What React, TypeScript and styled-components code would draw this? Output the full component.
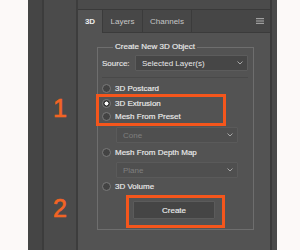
import styled, { createGlobalStyle } from "styled-components";

const Global = createGlobalStyle`
  html, body {
    margin: 0;
    padding: 0;
    background: #fcf9f8;
    font-family: "Liberation Sans", Arial, sans-serif;
  }
`;

const Screen = styled.div`
  display: flex;
  height: 250px;
  padding-left: 28px;
  overflow: hidden;
`;

const DockStrip = styled.div`
  width: 14px;
  background: #454545;
  border-right: 2px solid #3c3c3c;
`;

const Gutter = styled.div`
  width: 32px;
  background: #4b4b4b;
  border-right: 2px solid #3d3d3d;
  display: flex;
  flex-direction: column;
  align-items: center;
`;

const StepNumber = styled.div<{ $top: number }>`
  margin-top: ${(p) => p.$top}px;
  height: 25px;
  line-height: 25px;
  font-size: 25px;
  color: #f26424;
  -webkit-text-stroke: 0.6px #f26424;
`;

const Panel = styled.div`
  width: 192px;
  background: #535353;
  display: flex;
  flex-direction: column;
`;

const PanelEdge = styled.div`
  width: 5px;
  background: #4a4a4a;
  border-left: 2px solid #3a3a3a;
`;

const TopStrip = styled.div`
  height: 9px;
  background: #4b4b4b;
  border-bottom: 1px solid #3a3a3a;
`;

const TabBar = styled.div`
  display: flex;
  height: 23px;
  background: #464646;
  align-items: stretch;
`;

const Tab = styled.div<{ $w: number; $active?: boolean }>`
  width: ${(p) => p.$w}px;
  box-sizing: border-box;
  display: flex;
  align-items: center;
  justify-content: center;
  font-size: 8px;
  font-weight: ${(p) => (p.$active ? "bold" : "normal")};
  color: ${(p) => (p.$active ? "#ececec" : "#c6c6c6")};
  background: ${(p) => (p.$active ? "#535353" : "#474747")};
  border-right: 1px solid #3b3b3b;
  border-bottom: ${(p) => (p.$active ? "none" : "1px solid #3b3b3b")};
`;

const TabFill = styled.div`
  flex: 1;
  display: flex;
  align-items: center;
  justify-content: flex-end;
  padding-right: 6px;
  border-bottom: 1px solid #3b3b3b;
`;

const Content = styled.div`
  padding: 9px 16px 0 19px;
`;

const Group = styled.fieldset`
  margin: 0;
  padding: 3px 5px 1px 4px;
  border: 1px solid #6e6e6e;
  min-width: 0;
`;

const GroupTitle = styled.legend`
  margin-left: 11px;
  padding: 0 2px;
  height: 10px;
  line-height: 10px;
  font-size: 8px;
  color: #ececec;
  -webkit-text-stroke: 0.15px #ececec;
`;

const SourceRow = styled.div`
  display: flex;
  align-items: center;
  justify-content: space-between;
  height: 16px;
  font-size: 8px;
  color: #e4e4e4;
  -webkit-text-stroke: 0.15px #e4e4e4;
`;

const Select = styled.div<{ $w: number; $disabled?: boolean }>`
  width: ${(p) => p.$w}px;
  height: 16px;
  box-sizing: border-box;
  display: flex;
  align-items: center;
  justify-content: space-between;
  padding: 0 4px 0 6px;
  font-size: 8px;
  color: ${(p) => (p.$disabled ? "#7f7f7f" : "#e8e8e8")};
  -webkit-text-stroke: 0;
  background: ${(p) => (p.$disabled ? "#4f4f4f" : "#464646")};
  border: 1px solid ${(p) => (p.$disabled ? "#5a5a5a" : "#5c5c5c")};
  border-radius: 1px;
`;

const Indented = styled.div<{ $top: number }>`
  margin: ${(p) => p.$top}px 0 0 14px;
`;

const Divider = styled.div`
  margin-top: 6px;
  height: 1px;
  background: #494949;
`;

const RadioRow = styled.div<{ $h: number; $top?: number }>`
  display: flex;
  align-items: center;
  gap: 4px;
  height: ${(p) => p.$h}px;
  margin-top: ${(p) => p.$top ?? 0}px;
  font-size: 8px;
  color: #ececec;
  -webkit-text-stroke: 0.15px #ececec;
`;

const RadioDot = styled.span<{ $checked?: boolean }>`
  width: 9px;
  height: 9px;
  box-sizing: border-box;
  border-radius: 50%;
  border: 1px solid #7a7a7a;
  background: ${(p) =>
    p.$checked
      ? "radial-gradient(circle, #ffffff 0 1.8px, #3a3a3a 2.2px)"
      : "#434343"};
`;

const Callout = styled.div<{ $top: number; $left: number; $w: number }>`
  margin: ${(p) => p.$top}px 0 0 ${(p) => p.$left}px;
  width: ${(p) => p.$w}px;
  box-sizing: border-box;
  border: 3px solid #f5561c;
`;

const RadioGroup = styled.div`
  padding-left: 3px;
`;

const ButtonWrap = styled.div`
  padding: 3px 7px 6px 4px;
`;

const CreateButton = styled.div`
  height: 18px;
  box-sizing: border-box;
  display: flex;
  align-items: center;
  justify-content: center;
  font-size: 8px;
  color: #ececec;
  -webkit-text-stroke: 0.15px #ececec;
  background: #454545;
  border: 1px solid #5b5b5b;
  border-radius: 1px;
`;

const Chevron = () => (
  <svg width="6" height="4" viewBox="0 0 6 4">
    <polyline points="0.5,0.5 3,3 5.5,0.5" fill="none" stroke="#a8a8a8" strokeWidth="1" />
  </svg>
);

const MenuIcon = () => (
  <svg width="8" height="6" viewBox="0 0 8 6">
    <rect x="0" y="0" width="8" height="1.2" fill="#a0a0a0" />
    <rect x="0" y="2.4" width="8" height="1.2" fill="#a0a0a0" />
    <rect x="0" y="4.8" width="8" height="1.2" fill="#a0a0a0" />
  </svg>
);

export default function App() {
  return (
    <>
      <Global />
      <Screen>
        <DockStrip />
        <Gutter>
          <StepNumber $top={96}>1</StepNumber>
          <StepNumber $top={75}>2</StepNumber>
        </Gutter>
        <Panel>
          <TopStrip />
          <TabBar>
            <Tab $w={25} $active>3D</Tab>
            <Tab $w={40}>Layers</Tab>
            <Tab $w={49}>Channels</Tab>
            <TabFill>
              <MenuIcon />
            </TabFill>
          </TabBar>
          <Content>
            <Group>
              <GroupTitle>Create New 3D Object</GroupTitle>
              <SourceRow>
                <span>Source:</span>
                <Select $w={113}>
                  <span>Selected Layer(s)</span>
                  <Chevron />
                </Select>
              </SourceRow>
              <Divider />
              <RadioRow $h={12} $top={4}>
                <RadioDot />
                3D Postcard
              </RadioRow>
              <Callout $top={0} $left={-6} $w={130}>
                <RadioGroup>
                  <RadioRow $h={13}>
                    <RadioDot $checked />
                    3D Extrusion
                  </RadioRow>
                  <RadioRow $h={13}>
                    <RadioDot />
                    Mesh From Preset
                  </RadioRow>
                </RadioGroup>
              </Callout>
              <Indented $top={1}>
                <Select $w={122} $disabled>
                  <span>Cone</span>
                  <Chevron />
                </Select>
              </Indented>
              <RadioRow $h={14} $top={2}>
                <RadioDot />
                Mesh From Depth Map
              </RadioRow>
              <Indented $top={3}>
                <Select $w={122} $disabled>
                  <span>Plane</span>
                  <Chevron />
                </Select>
              </Indented>
              <RadioRow $h={14} $top={1}>
                <RadioDot />
                3D Volume
              </RadioRow>
              <Callout $top={2} $left={24} $w={99}>
                <ButtonWrap>
                  <CreateButton>Create</CreateButton>
                </ButtonWrap>
              </Callout>
            </Group>
          </Content>
        </Panel>
        <PanelEdge />
      </Screen>
    </>
  );
}
